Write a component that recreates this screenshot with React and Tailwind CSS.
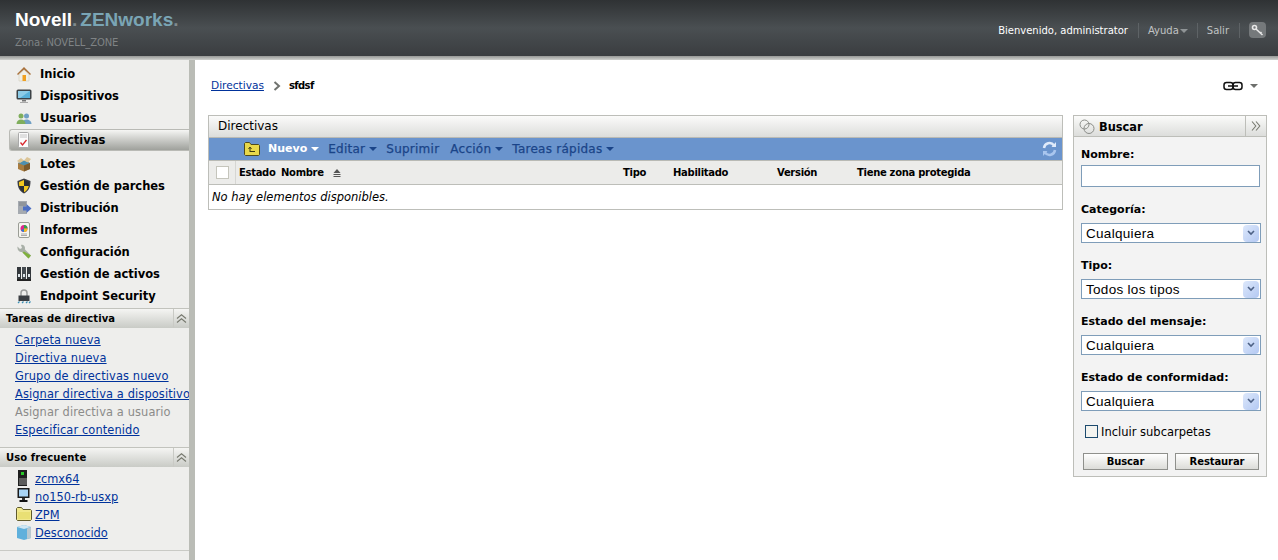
import React from "react";

const Home = () => (
  <svg width="16" height="16" viewBox="0 0 16 16">
    <path d="M1 8 8 1l7 7-1 1-6-5.500L2 9z" fill="#a8703a" />
    <path d="M3 8.500 8 4l5 4.500V15H3z" fill="#f1efe6" stroke="#c9c5b5" strokeWidth=".5" />
    <rect x="6.500" y="9" width="3.500" height="6" fill="#f0a020" />
  </svg>
);
const Monitor = () => (
  <svg width="16" height="16" viewBox="0 0 16 16">
    <rect x=".5" y="1.500" width="15" height="10" rx="1.500" fill="#3c4246" />
    <rect x="2" y="3" width="12" height="7" fill="#58b0d8" />
    <path d="M2 3h12L4 10H2z" fill="#8ccbe6" />
    <path d="M6 12h4v1.500H6z" fill="#777" />
    <path d="M4 14h8v1H4z" fill="#aaa" />
  </svg>
);
const Users = () => (
  <svg width="16" height="16" viewBox="0 0 16 16">
    <circle cx="10.500" cy="6" r="2.500" fill="#6f9fc4" />
    <path d="M6 14c0-3 2-4.500 4.500-4.500S15.500 11 15.500 14z" fill="#6f9fc4" />
    <circle cx="5" cy="6" r="2.500" fill="#7fae5c" />
    <path d="M.5 14c0-3 2-4.500 4.500-4.500S9.500 11 9.500 14z" fill="#7fae5c" />
  </svg>
);
const PolicyDoc = () => (
  <svg width="16" height="16" viewBox="0 0 16 16">
    <rect x="2.500" y=".5" width="10" height="15" rx="1" fill="#fbfbfb" stroke="#a9a9a9" />
    <path d="M4 3h7M4 5h7" stroke="#c4c4c4" />
    <path d="M4.500 10.500 6.500 13l4-5" fill="none" stroke="#d8262c" strokeWidth="1.300" />
  </svg>
);
const Box = () => (
  <svg width="16" height="16" viewBox="0 0 16 16">
    <path d="M2 7l6-2.500L14 7v6l-6 2.500L2 13z" fill="#a97c3f" />
    <path d="M2 7l6 2.500L14 7 8 4.500z" fill="#4d8fb0" />
    <path d="M8 9.500v6l6-2.500V7z" fill="#7c5a2c" />
    <path d="M1 5l4-3 3 2.500-4 2.500zM15 3l-4-2-3 3.500 4 2z" fill="#dcc597" />
  </svg>
);
const Shield = () => (
  <svg width="16" height="16" viewBox="0 0 16 16">
    <path d="M8 .5 14.500 3c0 6-1.500 10-6.500 12.500C3 13 1.500 9 1.500 3z" fill="#3b3d42" />
    <path d="M8 2v6H3.200C3 6.500 3 5 3 4zM8 8h4.800C12 11 10.500 13 8 14.300z" fill="#f4c91f" />
    <path d="M8 2l5 2c0 1 0 2.500-.2 4H8zM8 8v6.300C5.500 13 4 11 3.200 8z" fill="#2c3036" />
  </svg>
);
const Distribution = () => (
  <svg width="16" height="16" viewBox="0 0 16 16">
    <rect x="2" y="1" width="9" height="13" fill="#a5aab0" />
    <path d="M3 3h7M3 5h7" stroke="#7c8187" />
    <path d="M7 6.500h3.500V4L15.500 8.500 10.500 13v-2.500H7z" fill="#4d6fc4" />
  </svg>
);
const Report = () => (
  <svg width="16" height="16" viewBox="0 0 16 16">
    <rect x="2.500" y=".5" width="11" height="15" rx="1.500" fill="#f5f5f0" stroke="#9a9d96" />
    <circle cx="8" cy="6.500" r="3.500" fill="#e0248c" />
    <path d="M8 6.500V3a3.500 3.500 0 0 1 3.500 3.500z" fill="#2aa84a" />
    <path d="M8 6.500h3.500A3.500 3.500 0 0 1 8 10z" fill="#f0c020" />
    <path d="M8 6.500V10a3.500 3.500 0 0 1-3-1.700z" fill="#2a80d0" />
    <path d="M5 12h6M5 13.500h6" stroke="#aaa" />
  </svg>
);
const Wrench = () => (
  <svg width="16" height="16" viewBox="0 0 16 16">
    <path d="M1.500 2.500 4 5l2-1-1-3c2-.8 4 .8 4 3 0 .5 0 1-.2 1.300L15 11.500 12.500 14.500 6 8C3.500 8.500 1 6 1.500 2.500z" fill="#a9b0a8" />
    <path d="M8 7.500 15 11.500 12.500 14.500 6.500 8.500z" fill="#7fb03c" />
  </svg>
);
const Binders = () => (
  <svg width="16" height="16" viewBox="0 0 16 16">
    <rect x="1" y="1" width="4" height="14" fill="#33383c" />
    <rect x="6" y="1" width="4" height="14" fill="#454b50" />
    <rect x="11" y="1" width="4" height="14" fill="#33383c" />
    <path d="M2 8h2v3H2zM7 8h2v3H7zM12 8h2v3h-2z" fill="#dfe6ea" />
    <path d="M1 13h14v2H1z" fill="#222" />
  </svg>
);
const Lock = () => (
  <svg width="16" height="16" viewBox="0 0 16 16">
    <path d="M5 8V5a3 3 0 0 1 6 0v3" fill="none" stroke="#9b9d9c" strokeWidth="1.500" />
    <rect x="2.500" y="7.500" width="11" height="5.500" fill="#3a3e42" />
    <path d="M2 15l1.500-1.500M6 15l1.500-1.500M10 15l1.500-1.500M13 15l1.500-1.500" stroke="#3a8fb5" strokeWidth="1.200" />
  </svg>
);
const Tower = () => (
  <svg width="16" height="16" viewBox="0 0 16 16">
    <rect x="2" y="0" width="9" height="16" fill="#1e1e1e" />
    <rect x="5" y="2" width="3" height="3" fill="#28c828" />
    <path d="M4 8v7M6 8v7M8 8v7M10 8v7" stroke="#9a9a9a" />
  </svg>
);
const Desktop = () => (
  <svg width="16" height="16" viewBox="0 0 16 16">
    <rect x="1.500" y="0" width="12" height="10" fill="#1a1a1a" />
    <rect x="3" y="1.500" width="9" height="7" fill="#a8d4f4" />
    <path d="M6 10h3v2H6z" fill="#333" />
    <path d="M3.500 12h8v2h-8z" fill="#111" />
  </svg>
);
const Folder = () => (
  <svg width="16" height="14" viewBox="0 0 16 14">
    <path d="M.5 3V1.500l1-1h4l1.500 2h7.500l1 1v9l-1 1h-13l-1-1z" fill="#f1e88c" stroke="#5f5a2c" />
    <path d="M2 5h12v7H2z" fill="#e9df74" />
  </svg>
);
const FolderUp = () => (
  <svg width="16" height="14" viewBox="0 0 16 14">
    <path d="M.5 3V1.500l1-1h4l1.500 2h7.500l1 1v9l-1 1h-13l-1-1z" fill="#e8d84a" stroke="#4f4a1c" />
    <path d="M6 9.500h5M6 10V6M4.500 7 6 5l1.500 2" fill="none" stroke="#3d3a10" />
  </svg>
);
const Cube = () => (
  <svg width="16" height="16" viewBox="0 0 16 16">
    <path d="M1 3 8 1l7 2v11l-7 2-7-2z" fill="#5fb0dc" />
    <path d="M1 3l7 2 7-2-7-2z" fill="#cfe6f2" />
    <path d="M11 4.500l4-1.500v11l-4 1z" fill="#b8c8d0" />
  </svg>
);
const Caret = ({ className }) => (
  <svg width="8" height="4" viewBox="0 0 8 4" className={className}>
    <path d="M0 0h8L4 4z" fill="currentColor" />
  </svg>
);
const ChevronsUp = () => (
  <svg width="11" height="9" viewBox="0 0 11 9" fill="none" stroke="#77796f" strokeWidth="1.100">
    <path d="M1 4.500 5.500 .8 10 4.500M1 8.500 5.500 4.800 10 8.500" />
  </svg>
);
const Select = ({ value }) => (
  <div className="flex h-5 w-[180px] items-center justify-between border border-[#7f9db9] bg-white pl-1 pr-px font-['Liberation_Sans',sans-serif] text-[13.500px] font-normal tracking-[0.3px] text-black">
    <span className="pt-[2px]">{value}</span>
    <span className="flex h-[17px] w-4 items-center justify-center rounded-sm bg-gradient-to-br from-[#dde8fb] to-[#b3c8f2]">
      <svg width="8" height="6" viewBox="0 0 8 6" fill="none" stroke="#4d6185" strokeWidth="1.600">
        <path d="M1 1l3 3 3-3" />
      </svg>
    </span>
  </div>
);

const navItems = [
  ["Inicio", Home, false],
  ["Dispositivos", Monitor, false],
  ["Usuarios", Users, false],
  ["Directivas", PolicyDoc, true],
  ["Lotes", Box, false],
  ["Gestión de parches", Shield, false],
  ["Distribución", Distribution, false],
  ["Informes", Report, false],
  ["Configuración", Wrench, false],
  ["Gestión de activos", Binders, false],
  ["Endpoint Security", Lock, false],
];
const taskLinks = [
  ["Carpeta nueva", true],
  ["Directiva nueva", true],
  ["Grupo de directivas nuevo", true],
  ["Asignar directiva a dispositivo", true],
  ["Asignar directiva a usuario", false],
  ["Especificar contenido", true],
];
const frequent = [
  ["zcmx64", Tower],
  ["no150-rb-usxp", Desktop],
  ["ZPM", Folder],
  ["Desconocido", Cube],
];

const SectionHead = ({ title }) => (
  <div className="flex h-5 items-center justify-between border-t border-[#c2c3bd] bg-gradient-to-b from-[#f5f5f3] to-[#c9cbc6]">
    <span className="pl-1.5 text-[10px] font-bold tracking-[0.1px] text-black">{title}</span>
    <span className="flex h-full w-4 items-center justify-center border-l border-[#c9cac5]">
      <ChevronsUp />
    </span>
  </div>
);

export default function App() {
  return (
    <div className="flex h-[560px] w-[1278px] flex-col overflow-hidden bg-white font-['DejaVu_Sans',sans-serif] text-[11px] text-black">
      <header className="flex h-14 items-stretch justify-between bg-gradient-to-b from-[#2f3234] via-[#4a4f52] to-[#3a3d40]">
        <div className="pl-[15px] pt-2">
          <div className="font-['Liberation_Sans',sans-serif] text-[19px] font-bold leading-6 text-white">
            Novell<span className="text-[#7f8a8e]">.</span>
            <span className="ml-[3px] text-[#7aa5b5]">ZENworks</span>
            <span className="text-[#7f8a8e]">.</span>
          </div>
          <div className="mt-[5px] text-[10px] leading-3 tracking-[-0.1px] text-[#7f8385]">Zona: NOVELL_ZONE</div>
        </div>
        <div className="flex items-center pr-3 pt-1 text-[10px]">
          <span className="text-white">Bienvenido, administrator</span>
          <span className="ml-[10px] mr-[9px] h-[15px] border-l border-[#5e6366]" />
          <span className="text-[#c0c3c4]">Ayuda</span>
          <Caret className="ml-px mt-0.5 text-[#8f9496]" />
          <span className="mx-[9px] h-[15px] border-l border-[#5e6366]" />
          <span className="text-[#c0c3c4]">Salir</span>
          <span className="ml-[10px] mr-[9px] h-[15px] border-l border-[#5e6366]" />
          <span className="flex h-4 w-[17px] items-center justify-center rounded-sm bg-[#75797b]">
            <svg width="13" height="13" viewBox="0 0 13 13" fill="none" stroke="#e8e8e8" strokeWidth="1.600">
              <circle cx="3.500" cy="3.500" r="2" />
              <path d="M5 5l6.500 6M9 9.500l1.500-1.500" />
            </svg>
          </span>
        </div>
      </header>
      <div className="h-1 bg-gradient-to-b from-[#969896] to-[#d0d1ce]" />

      <div className="flex min-h-0 flex-1">
        <aside className="w-[195px] shrink-0 overflow-hidden border-r-[6px] border-[#babcb6] bg-[#eeeeec]">
          <nav className="pb-px pt-[3px]">
            {navItems.map(([label, Icon, active]) => (
              <div
                key={label}
                className={
                  active
                    ? "mb-0.5 ml-[9px] flex h-[22px] items-center gap-[8px] rounded-l-[3px] border border-r-0 border-[#b9bab5] bg-gradient-to-b from-[#f6f6f4] to-[#9fa19c] pl-[6px] text-[11.500px] font-bold"
                    : "ml-[16px] flex h-[22px] items-center gap-[8px] text-[11.500px] font-bold"
                }
              >
                <Icon />
                <span className="pt-px">{label}</span>
              </div>
            ))}
          </nav>
          <div>
            <SectionHead title="Tareas de directiva" />
            <ul className="whitespace-nowrap pb-[9px] pt-[2px] text-[11.400px] tracking-[0.12px]">
              {taskLinks.map(([label, enabled]) => (
                <li key={label} className="h-[18px] pl-[15px] pt-px leading-[18px]">
                  {enabled ? <a className="text-[#00329b] underline">{label}</a> : <span className="text-[#8b8b89]">{label}</span>}
                </li>
              ))}
            </ul>
            <SectionHead title="Uso frecuente" />
            <ul className="border-b border-[#c9cac5] pb-[9px] pt-[2px] text-[11.400px]">
              {frequent.map(([label, Icon]) => (
                <li key={label} className="flex h-[18px] items-center gap-[3px] pl-[16px]">
                  <Icon />
                  <a className="pt-[3px] text-[#00329b] underline">{label}</a>
                </li>
              ))}
            </ul>
          </div>
        </aside>

        <main className="min-w-0 flex-1 pl-[13px] pr-[11px]">
          <div className="flex h-[55px] items-start justify-between pt-[19px]">
            <div className="flex h-[14px] items-center pl-[3px] text-[10.600px]">
              <a className="text-[#00329b] underline">Directivas</a>
              <svg width="8" height="10" viewBox="0 0 8 10" fill="none" stroke="#70736f" strokeWidth="2" className="ml-[9px] mr-2">
                <path d="M1.500 1 6 5 1.500 9" />
              </svg>
              <span className="pb-0.5 text-[10px] font-bold tracking-[-0.6px]">sfdsf</span>
            </div>
            <div className="flex h-[14px] items-center gap-[7px] pr-[9px]">
              <svg width="20" height="10" viewBox="0 0 20 10" fill="none" stroke="#111" strokeWidth="1.500">
                <rect x="1" y="1.500" width="9" height="7" rx="2.500" />
                <rect x="10" y="1.500" width="9" height="7" rx="2.500" />
                <path d="M5 5h10" />
              </svg>
              <Caret className="text-[#6d6f6c]" />
            </div>
          </div>

          <div className="flex items-start gap-[10px]">
            <section className="w-[855px] shrink-0 border border-[#bdbeb9]">
              <div className="flex h-[21px] items-center bg-gradient-to-b from-[#fbfbfa] to-[#dcdddb] pb-0.5 pl-[9px] text-[12px]">Directivas</div>
              <div className="flex h-[24px] items-center border-y border-[#b9bab5] bg-[#6a94cd] pl-[35px] pr-[5px] text-[12px] tracking-[0.25px] text-[#1a4488]">
                <FolderUp />
                <span className="ml-2 text-[11px] font-bold tracking-normal text-white">Nuevo</span>
                <Caret className="ml-1 text-white" />
                <span className="ml-[9px] [-webkit-text-stroke:0.25px]">Editar</span>
                <Caret className="ml-1" />
                <span className="ml-[9px] [-webkit-text-stroke:0.25px]">Suprimir</span>
                <span className="ml-[11px] [-webkit-text-stroke:0.25px]">Acción</span>
                <Caret className="ml-1" />
                <span className="ml-[9px] [-webkit-text-stroke:0.25px]">Tareas rápidas</span>
                <Caret className="ml-1" />
                <svg width="15" height="16" viewBox="0 0 15 16" fill="none" stroke="#dfeafa" strokeWidth="2.500" className="ml-auto">
                  <path d="M2 7a5.500 5.500 0 0 1 10-2.500" />
                  <path d="M13 9A5.500 5.500 0 0 1 3 11.500" stroke="#a9c6ee" />
                  <path d="M14 1v5H9.500z" fill="#dfeafa" stroke="none" />
                  <path d="M1 15v-5h4.500z" fill="#a9c6ee" stroke="none" />
                </svg>
              </div>
              <div className="flex h-[24px] items-center border-b border-[#bdbeb9] bg-[#ececea] text-[10px] font-bold tracking-[-0.3px]">
                <div className="flex h-full w-[27px] items-center justify-center border-r border-[#d6d6d3]">
                  <span className="h-[13px] w-[13px] border border-[#c5c5bc] bg-white" />
                </div>
                <span className="ml-[3px] w-[42px]">Estado</span>
                <span className="w-[52px]">Nombre</span>
                <svg width="8" height="8" viewBox="0 0 8 8" fill="#555">
                  <path d="M4 0l3.500 4H.5zM.5 5h7v1h-7zM.5 7h7v1h-7z" />
                </svg>
                <span className="ml-[282px] w-[50px]">Tipo</span>
                <span className="w-[104px]">Habilitado</span>
                <span className="w-[80px]">Versión</span>
                <span>Tiene zona protegida</span>
              </div>
              <div className="flex h-[24px] items-center pl-[3px] pt-px text-[11.500px] italic">No hay elementos disponibles.</div>
            </section>

            <section className="h-[362px] w-[194px] shrink-0 border border-[#bdbeb9] bg-[#f3f3f3]">
              <div className="flex h-[21px] items-center justify-between border-b border-[#bdbeb9] bg-gradient-to-b from-[#fbfbfa] to-[#dcdddb]">
                <div className="flex items-center gap-[4px] pl-[5px] text-[11.400px] font-bold">
                  <svg width="16" height="15" viewBox="0 0 16 15" fill="none" stroke="#8b8d89">
                    <circle cx="5.500" cy="5.500" r="4.500" />
                    <circle cx="10" cy="9.500" r="5" />
                  </svg>
                  <span className="pt-[3px]">Buscar</span>
                </div>
                <span className="flex h-full w-[21px] items-center justify-center border-l border-[#bdbeb9]">
                  <svg width="10" height="10" viewBox="0 0 10 10" fill="none" stroke="#77796f" strokeWidth="1.100">
                    <path d="M1 .5 4.800 5 1 9.500M5 .5 8.800 5 5 9.500" />
                  </svg>
                </span>
              </div>
              <div className="pl-[7px] pr-[5px] pt-[10px] text-[11px] font-bold">
                <div className="h-[18px] leading-[16px]">Nombre:</div>
                <div className="h-[22px] w-[179px] border border-[#7f9db9] bg-white" />
                <div className="mt-[15px] h-[21px] leading-[16px]">Categoría:</div>
                <Select value="Cualquiera" />
                <div className="mt-[15px] h-[21px] leading-[16px]">Tipo:</div>
                <Select value="Todos los tipos" />
                <div className="mt-[15px] h-[21px] leading-[16px]">Estado del mensaje:</div>
                <Select value="Cualquiera" />
                <div className="mt-[15px] h-[21px] leading-[16px]">Estado de conformidad:</div>
                <Select value="Cualquiera" />
                <div className="mt-[14px] flex h-[13px] items-center gap-[3px] pl-[4px] text-[11.500px] font-normal">
                  <span className="h-[13px] w-[13px] border border-[#1c4a6e] bg-[#f4f4f0]" />
                  <span className="pt-0.5">Incluir subcarpetas</span>
                </div>
                <div className="mt-[15px] flex gap-[7px] pl-[2px] text-[10px] tracking-[-0.1px]">
                  <button className="h-[17px] w-[85px] border border-[#8f908c] bg-gradient-to-b from-white to-[#dcdcd8] font-bold">Buscar</button>
                  <button className="h-[17px] w-[84px] border border-[#8f908c] bg-gradient-to-b from-white to-[#dcdcd8] font-bold">Restaurar</button>
                </div>
              </div>
            </section>
          </div>
        </main>
      </div>
    </div>
  );
}
